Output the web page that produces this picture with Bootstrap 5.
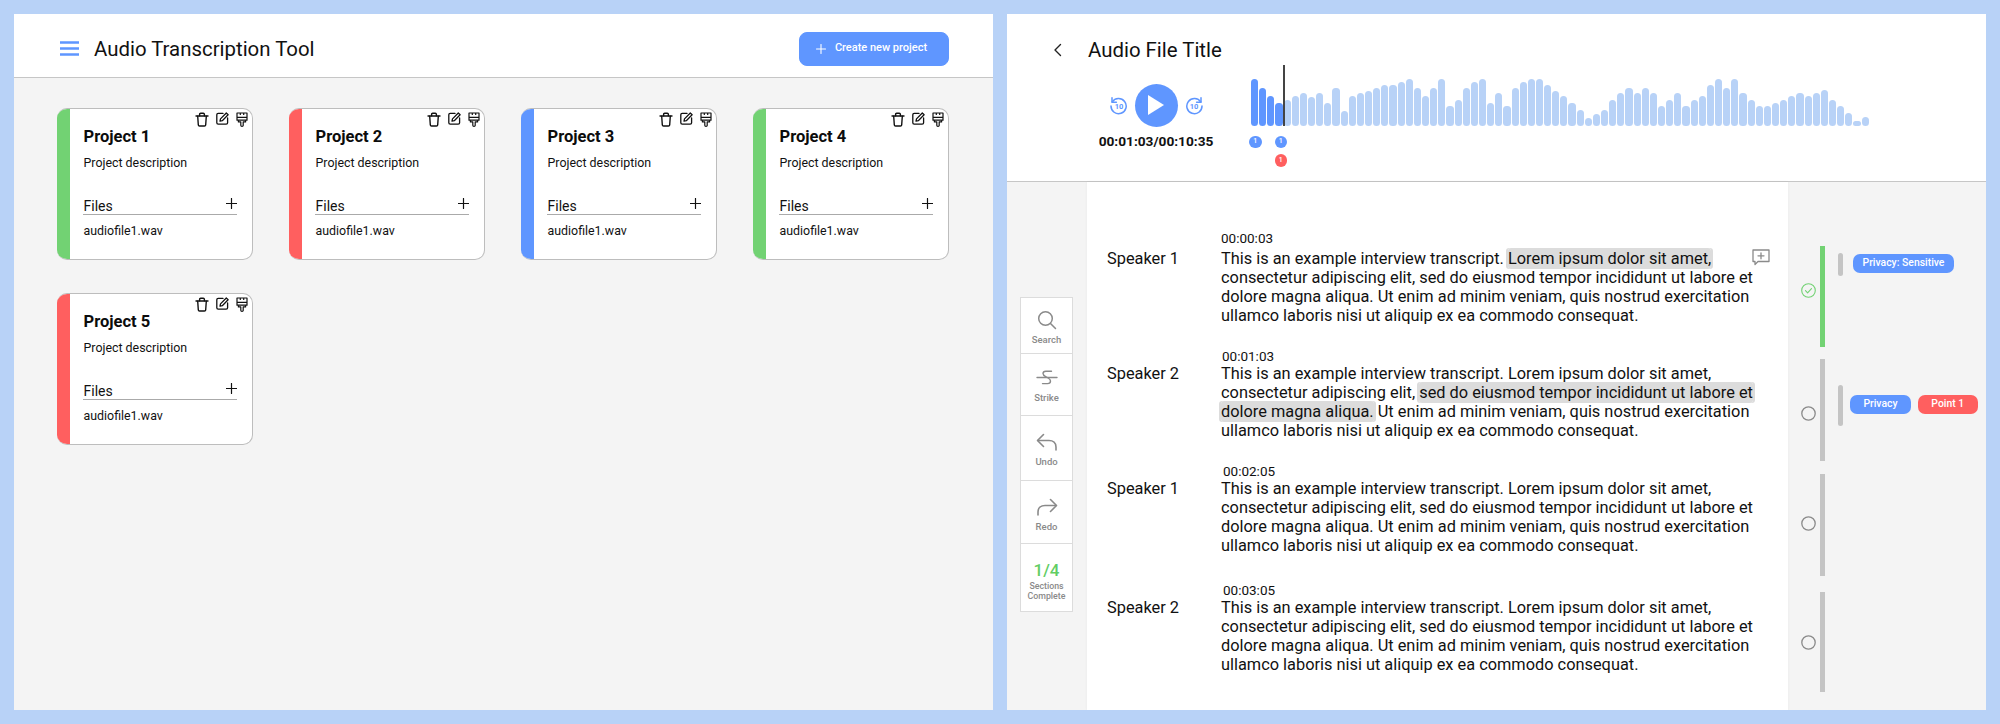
<!DOCTYPE html>
<html lang="en">
<head>
<meta charset="utf-8">
<title>Audio Transcription Tool</title>
<link href="https://cdn.jsdelivr.net/npm/bootstrap@5.3.0/dist/css/bootstrap.min.css" rel="stylesheet">
<style>
:root{--c-blue:#5f96ff;--c-green:#72d273;--c-red:#ff5f5f;--c-sky:#b8d2f7;--c-rule:#c6c6c6;--c-shade:#f4f4f4;}
html,body{height:724px;overflow:hidden;}
body{background:var(--c-sky);font-family:Roboto,"Liberation Sans",sans-serif;color:#111;}
.shell{padding:14px;gap:14px;height:724px;}
.pane{width:979px;height:696px;background:#fff;overflow:hidden;}
.app-head{height:64px;padding:6px 44px 0 46px;border-bottom:1.5px solid var(--c-rule);}
.app-title{font-size:20.4px;line-height:30px;font-weight:400;margin:0;}
.burger{width:19px;height:15px;margin-right:15px;flex:none;}
.new-btn{--bs-btn-bg:var(--c-blue);--bs-btn-border-color:var(--c-blue);--bs-btn-hover-bg:var(--c-blue);--bs-btn-hover-border-color:var(--c-blue);width:150px;height:34px;border-radius:8px;font-size:11px;font-weight:500;padding:0 5px 0 0;gap:9px;}
.projects{background:var(--c-shade);height:632px;padding:30px 44px 0 43px;}
.cards-row{--bs-gutter-x:36px;--bs-gutter-y:33px;}
.pcard{height:152px;border:1.5px solid #bdbdbd;border-left:0;border-radius:10px;overflow:hidden;}
.stripe{width:13px;flex:none;}
.st-green{background:var(--c-green);}.st-red{background:var(--c-red);}.st-blue{background:var(--c-blue);}
.pbody{padding:3px 4px 0 13.5px;}
.picons{height:13px;gap:7px;}
.pname{font-size:16.5px;line-height:22px;font-weight:700;margin:0.5px 0 7px;color:#0c0c0c;}
.pdesc{font-size:12.4px;line-height:16px;margin:0;}
.pfiles{font-size:14px;line-height:16px;height:17px;margin:27.5px 11px 0 -1px;padding-left:1px;border-bottom:1px solid #aaa;}
.pfile{font-size:12.4px;line-height:16px;margin:7.5px 0 0;}
.audio-head{height:168px;border-bottom:1.5px solid var(--c-rule);}
.audio-top{height:51px;padding:20px 0 0 46px;}
.chev{width:10px;height:14px;margin-right:25px;flex:none;}
.controls{width:150px;margin-left:74px;padding-top:19px;}
.ctl-row{gap:7px;height:42px;}
.playbtn{width:43px;height:43px;border-radius:50%;background:var(--c-blue);padding:0;border:0;}
.clock{font-size:13.7px;font-weight:700;line-height:18px;margin-top:6px;}
.wave-col{margin-left:20px;}
.wave{height:61px;gap:1px;}
.bar{width:7.15px;border-radius:3.5px;background:var(--c-sky);flex:none;}
.bar-on{background:var(--c-blue);}
.playhead{position:absolute;left:32px;top:0;width:1.5px;height:61px;background:#444;}
.pins{margin:9.5px 0 0 -2px;gap:13px;}
.pin{width:12.5px;height:12.5px;border-radius:50%;color:#fff;font-size:7px;font-weight:500;line-height:1;background:var(--c-blue);}
.pin-red{background:var(--c-red);margin-top:6px;}
.audio-body{height:528px;}
.tool-gutter{width:80px;background:var(--c-shade);padding:115px 0 0 13px;flex:none;}
.toolbox{width:53px;background:#fff;border:1.5px solid #dcdcdc;border-bottom:0;}
.tool{border-bottom:1.5px solid #dcdcdc;color:#8a8a8a;font-size:9.5px;font-weight:500;line-height:11px;text-align:center;}
.tool svg{display:block;}
.tool span{display:block;margin-top:4px;}
.t1{height:56px;padding-top:12px;}.t2{height:62px;padding-top:14px;}.t3{height:65px;padding-top:16px;}.t4{height:63px;padding-top:16px;}.t5{height:68px;padding-top:17px;}
.ratio{font-size:17px;line-height:18px;color:#62cd64;font-weight:500;}
.t5 .tool-sub{font-size:8.8px;line-height:10px;margin-top:2px;}
.transcript{width:701px;padding:48px 0 0 20px;flex:none;position:relative;box-shadow:0 0 3px rgba(0,0,0,.05);}
.turn{position:relative;}
.turn-2{margin-top:23px;}.turn-3{margin-top:23px;}.turn-4{margin-top:27px;}
.who{width:114px;flex:none;font-size:16.35px;line-height:19px;padding-top:16px;}
.turn-1 .who{padding-top:19px;}
.stamp{font-size:13.5px;line-height:16px;}
.turn-1 .stamp{margin-bottom:3px;}
.nudge-1{margin-left:1px;}.nudge-2{margin-left:2px;}
.said{font-size:16.35px;line-height:19px;width:450px;white-space:nowrap;color:#111;}
.hl{background:#dcdcdc;border-radius:3px;padding:1px 0;box-shadow:2px 0 #dcdcdc,-2px 0 #dcdcdc;-webkit-box-decoration-break:clone;box-decoration-break:clone;}
.note{position:absolute;left:645px;top:18.5px;}
.rail{background:var(--c-shade);flex:1;padding-top:64px;}
.rrow{margin-bottom:12px;padding-left:13px;}
.r1{height:101px;}.r2{height:102px;}.r3{height:102px;margin-top:13px;}.r4{height:100px;margin-top:16px;}
.tick{width:15px;height:15px;flex:none;margin-right:4px;}
.k1{margin-top:37px;}.k2{margin-top:47px;}.k3{margin-top:42px;}.k4{margin-top:43px;}
.vbar{width:5px;flex:none;background:#c4c4c4;}
.vbar-done{background:var(--c-green);}
.sbar{width:5px;border-radius:2.5px;background:#c4c4c4;margin-left:13px;flex:none;}
.s1{height:23px;margin-top:7px;}.s2{height:41px;margin-top:26px;}
.tag{height:18.5px;border-radius:7px;color:#fff;font-size:10.4px;font-weight:500;line-height:1;background:var(--c-blue);padding:0;}
.tag-red{background:var(--c-red);}
.tag-a{width:101px;margin:8px 0 0 10px;}
.tag-b{width:61px;margin:36px 0 0 7px;}
.tag-c{width:60.5px;margin:36px 0 0 6.5px;}
</style>
</head>
<body>
<svg width="0" height="0" class="position-absolute">
  <defs>
    <symbol id="i-trash" viewBox="0 0 14 15"><g fill="none" stroke="#111" stroke-width="1.4" stroke-linecap="round" stroke-linejoin="round"><path d="M1 4h12"/><path d="M4.6 3.8V2.4c0-.8.5-1.2 1.1-1.2h2.6c.6 0 1.1.4 1.1 1.2v1.4"/><path d="M2.7 4.2l.6 8.6c.1.8.5 1.2 1.2 1.2h5c.7 0 1.1-.4 1.2-1.2l.6-8.600"/></g></symbol>
    <symbol id="i-edit" viewBox="0 0 13 13"><g fill="none" stroke="#111" stroke-width="1.3" stroke-linecap="round" stroke-linejoin="round"><path d="M7 1.4H2.2C1.3 1.4.8 1.9.8 2.800v7.900c0 .9.5 1.4 1.4 1.4h8c.9 0 1.4-.5 1.4-1.4V6"/><path d="M10.3 1l1.8 1.8-5.800 5.900-2.300.5.5-2.300z"/></g></symbol>
    <symbol id="i-brush" viewBox="0 0 12 15"><g fill="none" stroke="#111" stroke-width="1.2" stroke-linejoin="round"><path d="M1 1h10v7.2H1z"/><path d="M1 5.4h10"/><path d="M4.3 1v2M7.7 1v2"/><path d="M2.4 8.2v1.700h2.400v3.300c0 .7.5 1.100 1.200 1.100s1.200-.4 1.200-1.100V9.900h2.400V8.200"/></g></symbol>
    <symbol id="i-plus" viewBox="0 0 11 11"><path d="M5.5.5v10M.5 5.500h10" stroke="currentColor" stroke-width="1.2" stroke-linecap="round" fill="none"/></symbol>
    <symbol id="i-empty" viewBox="0 0 15 15"><circle cx="7.5" cy="7.5" r="6.7" fill="none" stroke="#8a8a8a" stroke-width="1.3"/></symbol>
  </defs>
</svg>
<main class="shell d-flex">
  <section class="pane">
    <header class="app-head d-flex align-items-center">
      <svg class="burger" viewBox="0 0 19 15"><path d="M0 1.500h19M0 7.500h19M0 13.500h19" stroke="#5f96ff" stroke-width="2.400" fill="none"/></svg>
      <h1 class="app-title">Audio Transcription Tool</h1>
      <button class="btn btn-primary new-btn ms-auto d-flex align-items-center justify-content-center" type="button"><svg width="10" height="10"><use href="#i-plus"/></svg>Create new project</button>
    </header>
    <div class="projects">
      <div class="row row-cols-4 cards-row">
        <div class="col"><article class="card pcard flex-row"><div class="stripe st-green"></div><div class="pbody flex-fill"><div class="picons d-flex justify-content-end"><svg width="14" height="15"><use href="#i-trash"/></svg><svg width="13" height="13"><use href="#i-edit"/></svg><svg width="12" height="15"><use href="#i-brush"/></svg></div><h2 class="pname">Project 1</h2><p class="pdesc">Project description</p><div class="pfiles d-flex justify-content-between"><span>Files</span><svg width="11" height="11"><use href="#i-plus"/></svg></div><p class="pfile">audiofile1.wav</p></div></article></div>
        <div class="col"><article class="card pcard flex-row"><div class="stripe st-red"></div><div class="pbody flex-fill"><div class="picons d-flex justify-content-end"><svg width="14" height="15"><use href="#i-trash"/></svg><svg width="13" height="13"><use href="#i-edit"/></svg><svg width="12" height="15"><use href="#i-brush"/></svg></div><h2 class="pname">Project 2</h2><p class="pdesc">Project description</p><div class="pfiles d-flex justify-content-between"><span>Files</span><svg width="11" height="11"><use href="#i-plus"/></svg></div><p class="pfile">audiofile1.wav</p></div></article></div>
        <div class="col"><article class="card pcard flex-row"><div class="stripe st-blue"></div><div class="pbody flex-fill"><div class="picons d-flex justify-content-end"><svg width="14" height="15"><use href="#i-trash"/></svg><svg width="13" height="13"><use href="#i-edit"/></svg><svg width="12" height="15"><use href="#i-brush"/></svg></div><h2 class="pname">Project 3</h2><p class="pdesc">Project description</p><div class="pfiles d-flex justify-content-between"><span>Files</span><svg width="11" height="11"><use href="#i-plus"/></svg></div><p class="pfile">audiofile1.wav</p></div></article></div>
        <div class="col"><article class="card pcard flex-row"><div class="stripe st-green"></div><div class="pbody flex-fill"><div class="picons d-flex justify-content-end"><svg width="14" height="15"><use href="#i-trash"/></svg><svg width="13" height="13"><use href="#i-edit"/></svg><svg width="12" height="15"><use href="#i-brush"/></svg></div><h2 class="pname">Project 4</h2><p class="pdesc">Project description</p><div class="pfiles d-flex justify-content-between"><span>Files</span><svg width="11" height="11"><use href="#i-plus"/></svg></div><p class="pfile">audiofile1.wav</p></div></article></div>
        <div class="col"><article class="card pcard flex-row"><div class="stripe st-red"></div><div class="pbody flex-fill"><div class="picons d-flex justify-content-end"><svg width="14" height="15"><use href="#i-trash"/></svg><svg width="13" height="13"><use href="#i-edit"/></svg><svg width="12" height="15"><use href="#i-brush"/></svg></div><h2 class="pname">Project 5</h2><p class="pdesc">Project description</p><div class="pfiles d-flex justify-content-between"><span>Files</span><svg width="11" height="11"><use href="#i-plus"/></svg></div><p class="pfile">audiofile1.wav</p></div></article></div>
      </div>
    </div>
  </section>
  <section class="pane">
    <header class="audio-head">
      <div class="audio-top d-flex align-items-center">
        <svg class="chev" viewBox="0 0 10 14"><path d="M7.5 1.5L2 7l5.5 5.5" fill="none" stroke="#222" stroke-width="1.4" stroke-linecap="round" stroke-linejoin="round"/></svg>
        <h1 class="app-title">Audio File Title</h1>
      </div>
      <div class="d-flex">
        <div class="controls d-flex flex-column align-items-center">
          <div class="ctl-row d-flex align-items-center">
            <svg width="19" height="19" viewBox="0 0 19 19"><path d="M3.2 6A7.6 7.6 0 1 1 2 10" fill="none" stroke="#5f96ff" stroke-width="1.500" stroke-linecap="round"/><path d="M3 1.8V6.2h4.4" fill="none" stroke="#5f96ff" stroke-width="1.500" stroke-linecap="round" stroke-linejoin="round"/><text x="10" y="13" font-size="7.5" font-weight="700" fill="#5f96ff" text-anchor="middle" font-family="Roboto,sans-serif">10</text></svg>
            <button class="playbtn d-flex align-items-center justify-content-center" type="button" aria-label="Play"><svg width="18" height="20" viewBox="0 0 18 20"><path d="M1 0l16 10L1 20z" fill="#fff"/></svg></button>
            <svg width="19" height="19" viewBox="0 0 19 19"><path d="M15.8 6A7.6 7.6 0 1 0 17 10" fill="none" stroke="#5f96ff" stroke-width="1.500" stroke-linecap="round"/><path d="M16 1.8V6.2h-4.4" fill="none" stroke="#5f96ff" stroke-width="1.500" stroke-linecap="round" stroke-linejoin="round"/><text x="9" y="13" font-size="7.5" font-weight="700" fill="#5f96ff" text-anchor="middle" font-family="Roboto,sans-serif">10</text></svg>
          </div>
          <div class="clock">00:01:03/00:10:35</div>
        </div>
        <div class="wave-col">
          <div class="position-relative">
            <div class="wave d-flex align-items-end" id="wave"></div>
            <div class="playhead"></div>
          </div>
          <div class="pins d-flex align-items-start">
            <div class="pin d-flex align-items-center justify-content-center">1</div>
            <div class="d-flex flex-column">
              <div class="pin d-flex align-items-center justify-content-center">1</div>
              <div class="pin pin-red d-flex align-items-center justify-content-center">1</div>
            </div>
          </div>
        </div>
      </div>
    </header>
    <div class="audio-body d-flex">
      <div class="tool-gutter">
        <div class="toolbox">
          <div class="tool t1 d-flex flex-column align-items-center"><svg width="20" height="20" viewBox="0 0 20 20"><circle cx="8.5" cy="8.5" r="6.8" fill="none" stroke="#8a8a8a" stroke-width="1.5"/><path d="M13.5 13.5l5 5" stroke="#8a8a8a" stroke-width="1.5" stroke-linecap="round"/></svg><span>Search</span></div>
          <div class="tool t2 d-flex flex-column align-items-center"><svg width="22" height="20" viewBox="0 0 22 20"><path d="M1 9.500h20" stroke="#8a8a8a" stroke-width="1.400" stroke-linecap="round"/><path d="M15.500 3.200H9.800c-1.800 0-2.800 1-2.800 2.300 0 1.500 1 2.300 3 3.300l2.200 1.200c1.600.9 2.300 1.700 2.300 3 0 1.500-1.100 2.600-3 2.600H6.500" fill="none" stroke="#8a8a8a" stroke-width="1.400" stroke-linecap="round"/></svg><span>Strike</span></div>
          <div class="tool t3 d-flex flex-column align-items-center"><svg width="22" height="20" viewBox="0 0 22 20"><path d="M7.500 2.500L1.500 8.500l6 6" fill="none" stroke="#8a8a8a" stroke-width="1.600" stroke-linecap="round" stroke-linejoin="round"/><path d="M2 8.500h11c4 0 7 2.400 7 6.500v3" fill="none" stroke="#8a8a8a" stroke-width="1.600" stroke-linecap="round"/></svg><span>Undo</span></div>
          <div class="tool t4 d-flex flex-column align-items-center"><svg width="22" height="20" viewBox="0 0 22 20"><path d="M14.500 2.500l6 6-6 6" fill="none" stroke="#8a8a8a" stroke-width="1.600" stroke-linecap="round" stroke-linejoin="round"/><path d="M20 8.500H9c-4 0-7 2.400-7 6.500v3" fill="none" stroke="#8a8a8a" stroke-width="1.600" stroke-linecap="round"/></svg><span>Redo</span></div>
          <div class="tool t5"><div class="ratio">1/4</div><span class="tool-sub">Sections<br>Complete</span></div>
        </div>
      </div>
      <div class="transcript">
        <div class="turn turn-1 d-flex">
          <div class="who">Speaker 1</div>
          <div><div class="stamp">00:00:03</div><div class="said">This is an example interview transcript. <span class="hl">Lorem ipsum dolor sit amet,</span><br>consectetur adipiscing elit, sed do eiusmod tempor incididunt ut labore et<br>dolore magna aliqua. Ut enim ad minim veniam, quis nostrud exercitation<br>ullamco laboris nisi ut aliquip ex ea commodo consequat.</div></div>
          <svg class="note" width="18" height="17" viewBox="0 0 18 17"><path d="M1 1h16v11.500H6l-3 3v-3H1z" fill="none" stroke="#8a8a8a" stroke-width="1.300" stroke-linejoin="round"/><path d="M9 3.800v6M6 6.800h6" stroke="#8a8a8a" stroke-width="1.300" stroke-linecap="round"/></svg>
        </div>
        <div class="turn turn-2 d-flex">
          <div class="who">Speaker 2</div>
          <div><div class="stamp nudge-1">00:01:03</div><div class="said">This is an example interview transcript. Lorem ipsum dolor sit amet,<br>consectetur adipiscing elit, <span class="hl">sed do eiusmod tempor incididunt ut labore et<br>dolore magna aliqua.</span> Ut enim ad minim veniam, quis nostrud exercitation<br>ullamco laboris nisi ut aliquip ex ea commodo consequat.</div></div>
        </div>
        <div class="turn turn-3 d-flex">
          <div class="who">Speaker 1</div>
          <div><div class="stamp nudge-2">00:02:05</div><div class="said">This is an example interview transcript. Lorem ipsum dolor sit amet,<br>consectetur adipiscing elit, sed do eiusmod tempor incididunt ut labore et<br>dolore magna aliqua. Ut enim ad minim veniam, quis nostrud exercitation<br>ullamco laboris nisi ut aliquip ex ea commodo consequat.</div></div>
        </div>
        <div class="turn turn-4 d-flex">
          <div class="who">Speaker 2</div>
          <div><div class="stamp nudge-2">00:03:05</div><div class="said">This is an example interview transcript. Lorem ipsum dolor sit amet,<br>consectetur adipiscing elit, sed do eiusmod tempor incididunt ut labore et<br>dolore magna aliqua. Ut enim ad minim veniam, quis nostrud exercitation<br>ullamco laboris nisi ut aliquip ex ea commodo consequat.</div></div>
        </div>
      </div>
      <aside class="rail">
        <div class="rrow r1 d-flex">
          <svg class="tick k1" viewBox="0 0 15 15"><circle cx="7.5" cy="7.5" r="6.8" fill="none" stroke="#72d273" stroke-width="1.100"/><path d="M4.500 7.700l2.100 2.100 3.900-4.100" fill="none" stroke="#72d273" stroke-width="1.100" stroke-linecap="round" stroke-linejoin="round"/></svg>
          <div class="vbar vbar-done"></div>
          <div class="sbar s1"></div>
          <span class="tag tag-a d-flex align-items-center justify-content-center">Privacy: Sensitive</span>
        </div>
        <div class="rrow r2 d-flex">
          <svg class="tick k2"><use href="#i-empty"/></svg>
          <div class="vbar"></div>
          <div class="sbar s2"></div>
          <span class="tag tag-b d-flex align-items-center justify-content-center">Privacy</span>
          <span class="tag tag-red tag-c d-flex align-items-center justify-content-center">Point 1</span>
        </div>
        <div class="rrow r3 d-flex">
          <svg class="tick k3"><use href="#i-empty"/></svg>
          <div class="vbar"></div>
        </div>
        <div class="rrow r4 d-flex">
          <svg class="tick k4"><use href="#i-empty"/></svg>
          <div class="vbar"></div>
        </div>
      </aside>
    </div>
  </section>
</main>
<script src="https://cdn.jsdelivr.net/npm/bootstrap@5.3.0/dist/js/bootstrap.bundle.min.js"></script>
<script>
var heights=[47,38,30,23,26,30,33,29,33,23,38,15,30,33,35,38,41,41,44,47,38,30,38,47,20,26,38,44,47,23,33,20,38,44,47,47,41,35,30,23,16,8,12,16,26,33,38,33,38,33,20,26,33,20,26,30,41,47,38,47,33,26,20,20,23,26,30,33,30,33,36,26,20,13,5,9];
var wave=document.getElementById('wave');
heights.forEach(function(h,i){var b=document.createElement('div');b.className='bar'+(i<4?' bar-on':'');b.style.height=h+'px';wave.appendChild(b);});
</script>
</body>
</html>
